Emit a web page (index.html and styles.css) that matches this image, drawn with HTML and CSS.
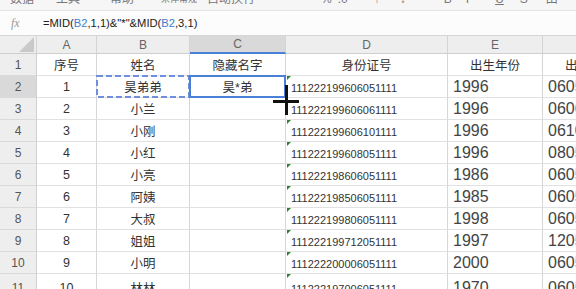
FILE: index.html
```html
<!DOCTYPE html>
<html lang="zh">
<head>
<meta charset="utf-8">
<title>Sheet</title>
<link rel="stylesheet" href="styles.css">
</head>
<body>
<div class="app">
  <div class="toolbar">
    <span class="tb t1">数据</span>
    <span class="tb t2">工具</span>
    <span class="tb t3">帮助</span>
    <span class="tb t4">宋体常规</span>
    <span class="tb t5">自动换行</span>
    <span class="tb t6">%</span>
    <span class="tb t7">.0</span>
    <span class="tb t8">↑</span>
    <span class="tb t9">↓</span>
    <span class="tb t10">B</span>
    <span class="tb t11">I</span>
    <span class="tb t12">U</span>
    <span class="tb t13">S</span>
    <span class="tb t14">田</span>
    <span class="tb t15">▾</span>
  </div>
  <div class="fbar">
    <span class="fx">fx</span>
    <span class="formula">=MID(<span class="ref">B2</span>,1,1)&amp;"*"&amp;MID(<span class="ref">B2</span>,3,1)</span>
  </div>
  <div class="sheet">
    <div class="ch corner"><span class="tri"></span></div>
    <div class="ch">A</div>
    <div class="ch">B</div>
    <div class="ch sel">C</div>
    <div class="ch">D</div>
    <div class="ch">E</div>
    <div class="ch">F</div>

    <div class="rh">1</div>
    <div class="c">序号</div>
    <div class="c">姓名</div>
    <div class="c">隐藏名字</div>
    <div class="c">身份证号</div>
    <div class="c">出生年份</div>
    <div class="c">出生日期</div>

    <div class="rh sel">2</div>
    <div class="c">1</div>
    <div class="c copy">昊弟弟<svg class="ants" width="94" height="23" viewBox="0 0 94 23"><rect x="1" y="1" width="92" height="21" fill="none" stroke="#6f8fdc" stroke-width="2" stroke-dasharray="6 3"/></svg></div>
    <div class="c active">昊*弟</div>
    <div class="c id g">111222199606051111</div>
    <div class="c yr">1996</div>
    <div class="c md">0605</div>

    <div class="rh">3</div>
    <div class="c">2</div>
    <div class="c">小兰</div>
    <div class="c"></div>
    <div class="c id">111222199606061111</div>
    <div class="c yr">1996</div>
    <div class="c md">0606</div>

    <div class="rh">4</div>
    <div class="c">3</div>
    <div class="c">小刚</div>
    <div class="c"></div>
    <div class="c id g">111222199606101111</div>
    <div class="c yr">1996</div>
    <div class="c md">0610</div>

    <div class="rh">5</div>
    <div class="c">4</div>
    <div class="c">小红</div>
    <div class="c"></div>
    <div class="c id g">111222199608051111</div>
    <div class="c yr">1996</div>
    <div class="c md">0805</div>

    <div class="rh">6</div>
    <div class="c">5</div>
    <div class="c">小亮</div>
    <div class="c"></div>
    <div class="c id g">111222198606051111</div>
    <div class="c yr">1986</div>
    <div class="c md">0605</div>

    <div class="rh">7</div>
    <div class="c">6</div>
    <div class="c">阿姨</div>
    <div class="c"></div>
    <div class="c id g">111222198506051111</div>
    <div class="c yr">1985</div>
    <div class="c md">0605</div>

    <div class="rh">8</div>
    <div class="c">7</div>
    <div class="c">大叔</div>
    <div class="c"></div>
    <div class="c id g">111222199806051111</div>
    <div class="c yr">1998</div>
    <div class="c md">0605</div>

    <div class="rh">9</div>
    <div class="c">8</div>
    <div class="c">姐姐</div>
    <div class="c"></div>
    <div class="c id g">111222199712051111</div>
    <div class="c yr">1997</div>
    <div class="c md">1205</div>

    <div class="rh">10</div>
    <div class="c">9</div>
    <div class="c">小明</div>
    <div class="c"></div>
    <div class="c id g">111222200006051111</div>
    <div class="c yr">2000</div>
    <div class="c md">0605</div>

    <div class="rh last">11</div>
    <div class="c last">10</div>
    <div class="c last">林林</div>
    <div class="c last"></div>
    <div class="c id g last">111222197006051111</div>
    <div class="c yr last">1970</div>
    <div class="c md last">0605</div>
  </div>
  <div class="cursor"><span class="ch-h"></span><span class="ch-v"></span></div>
</div>
</body>
</html>
```
FILE: styles.css
```css
* { box-sizing: border-box; }
html, body { margin: 0; padding: 0; overflow: hidden; background: #fff; }
body { font-family: "Liberation Sans", "Noto Sans CJK SC", sans-serif; color: #333; }
.app { position: relative; width: 576px; height: 289px; overflow: hidden; }

.toolbar {
  height: 11px;
  background: #f6f6f6;
  border-bottom: 1px solid #e4e4e4;
  position: relative;
  overflow: hidden;
  display: flex;
  align-items: flex-end;
  font-size: 12px;
  color: #777;
  white-space: nowrap;
}
.tb { line-height: 12px; margin-bottom: 5px; }
.t1 { margin-left: 10px; }
.t2 { margin-left: 22px; }
.t3 { margin-left: 30px; }
.t4 { margin-left: 27px; font-size: 9px; }
.t5 { margin-left: 10px; }
.t6 { margin-left: 66px; }
.t7 { margin-left: 6px; }
.t8 { margin-left: 26px; }
.t9 { margin-left: 20px; }
.t10 { margin-left: 38px; }
.t11 { margin-left: 14px; }
.t12 { margin-left: 26px; text-decoration: underline; }
.t13 { margin-left: 16px; }
.t14 { margin-left: 18px; }
.t15 { margin-left: 22px; }

.fbar {
  height: 25px;
  background: #fcfcfc;
  border-bottom: 1px solid #d6d6d6;
  display: flex;
  align-items: center;
}
.fx {
  width: 37px;
  padding-left: 11px;
  font-family: "Liberation Serif", serif;
  font-style: italic;
  font-size: 12px;
  color: #999;
}
.formula {
  padding-left: 6px;
  font-size: 11.2px;
  color: #222;
}
.ref { color: #3d7fd0; }

.sheet {
  display: grid;
  grid-template-columns: 37px 60px 93px 96px 162px 95px 95px;
  grid-template-rows: 18px;
  grid-auto-rows: 22px;
  width: 638px;
}
.ch {
  background: #eeeeee;
  border-right: 1px solid #d4d4d4;
  border-bottom: 1px solid #cfcfcf;
  display: flex;
  align-items: center;
  justify-content: center;
  font-size: 12px;
  color: #666;
}
.ch.sel { background: #d9d9d9; border-bottom: 2px solid #4a80d6; }
.corner { justify-content: flex-end; align-items: flex-end; padding: 0 2px 1px 0; }
.tri {
  width: 0; height: 0;
  border-left: 15px solid transparent;
  border-bottom: 15px solid #c9c9c9;
}
.rh {
  background: #eeeeee;
  border-right: 1px solid #cfcfcf;
  border-bottom: 1px solid #dadada;
  display: flex;
  align-items: center;
  justify-content: center;
  font-size: 12px;
  color: #555;
}
.rh.sel { background: #d9d9d9; }
.c {
  position: relative;
  border-right: 1px solid #d6d6d6;
  border-bottom: 1px solid #e1e1e1;
  display: flex;
  align-items: center;
  justify-content: center;
  font-size: 12.5px;
  color: #333;
  white-space: nowrap;
}
.c.id { justify-content: flex-start; padding-left: 5px; font-size: 11px; padding-top: 2px; }
.c.yr, .c.md { justify-content: flex-start; padding-left: 5px; font-size: 16px; color: #444; }
.last { padding-top: 6px; }
.c.id.last { padding-top: 8px; }
.c.g::before {
  content: "";
  position: absolute;
  left: 1px; top: 0;
  border-top: 4px solid #2f7d32;
  border-right: 4px solid transparent;
}
.ants { position: absolute; left: -1px; top: -1px; }
.active::after {
  content: "";
  position: absolute;
  left: -1px; top: -1px; right: -1px; bottom: -1px;
  border: 2px solid #4a80d6;
}

.cursor { position: absolute; left: 273px; top: 85px; width: 26px; height: 30px; }
.ch-h { position: absolute; left: 0; top: 15px; width: 26px; height: 3px; background: #111; }
.ch-v { position: absolute; left: 12px; top: 0; width: 3px; height: 30px; background: #111; }
```
